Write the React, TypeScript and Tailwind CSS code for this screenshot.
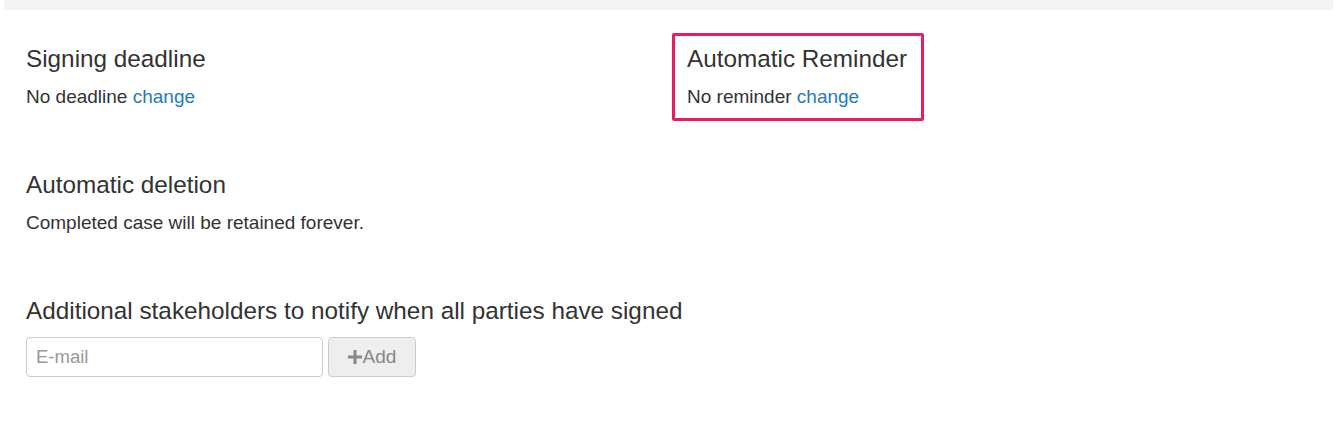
// Case settings panel: deadline / reminder / deletion / notify list.
export default function App() {
  return (
    <div className="min-h-[431px] bg-white font-['Liberation_Sans',Arial,sans-serif] text-[#333]">
      <div className="mx-[4px] h-[10px] bg-[#f4f4f4]" />

      <div className="flex pt-[23px]">
        <div className="w-[672px] pl-[26px] pt-[13px]">
          <h3 className="text-[24.3px] leading-[26px]">Signing deadline</h3>
          <p className="mt-[14px] text-[19px] leading-[22px]">
            No deadline <a className="text-[#2a7ab8]">change</a>
          </p>
        </div>
        <div>
          <div className="rounded-[2px] border-[3px] border-[#ea1d5d] pb-[10px] pl-[12px] pr-[14px] pt-[10px]">
            <h3 className="text-[24.3px] leading-[26px]">Automatic Reminder</h3>
            <p className="mt-[14px] text-[19px] leading-[22px]">
              No reminder <a className="text-[#2a7ab8]">change</a>
            </p>
          </div>
        </div>
      </div>

      <div className="pl-[26px] pt-[51px]">
        <h3 className="text-[24.3px] leading-[26px]">Automatic deletion</h3>
        <p className="mt-[14px] text-[19px] leading-[22px]">
          Completed case will be retained forever.
        </p>
      </div>

      <div className="pl-[26px] pt-[64px]">
        <h3 className="text-[24.3px] leading-[26px]">
          Additional stakeholders to notify when all parties have signed
        </h3>
        <div className="mt-[13px] flex gap-[5px]">
          <input
            placeholder="E-mail"
            className="h-[40px] w-[297px] rounded-[4px] border border-[#ccc] px-[9px] text-[18.5px] placeholder:text-[#999]"
          />
          <button className="flex h-[40px] w-[88px] items-center justify-center gap-[1px] rounded-[4px] border border-[#ccc] bg-[#eee] text-[19px] text-[#888]">
            <svg viewBox="0 0 14 14" className="h-[14px] w-[14px]" fill="currentColor" aria-hidden="true">
              <path d="M5.5 0h3v5.5H14v3H8.5V14h-3V8.5H0v-3h5.5z" />
            </svg>
            Add
          </button>
        </div>
      </div>
    </div>
  );
}
